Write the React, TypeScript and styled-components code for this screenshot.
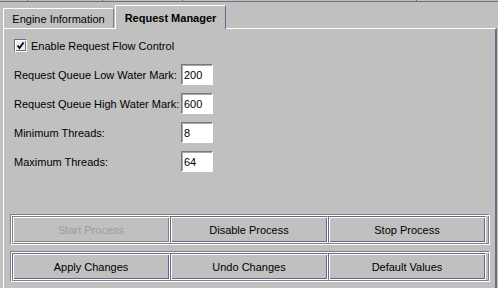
import React from 'react';
import styled, { createGlobalStyle } from 'styled-components';

const GlobalStyle = createGlobalStyle`
  html, body {
    margin: 0;
    padding: 0;
    background: #c0c0c0;
  }
  body {
    font-family: 'Liberation Sans', Arial, sans-serif;
    font-size: 11px;
    color: #000;
  }
`;

const DARK = '#66668a';
const SHADOW = '#808080';

const Window = styled.div`
  width: 498px;
  height: 288px;
  background: #c0c0c0;
  display: flex;
  flex-direction: column;
  overflow: hidden;
`;

const HeaderStrip = styled.div`
  display: flex;
  height: 2px;
`;

const HeaderCell = styled.div<{ $w?: number }>`
  flex: ${p => (p.$w ? `0 0 ${p.$w}px` : '1')};
  height: 1px;
  border-bottom: 1px solid #6e6e80;
  border-right: ${p => (p.$w ? '1px solid #6e6e80' : 'none')};
`;

const TabRow = styled.div`
  display: flex;
  align-items: flex-end;
  height: 23px;
  margin: 3px 0 0 3px;
`;

const Tab = styled.div<{ $active?: boolean }>`
  box-sizing: border-box;
  width: ${p => (p.$active ? '111px' : '111px')};
  height: ${p => (p.$active ? '24px' : '20px')};
  margin-left: ${p => (p.$active ? '1px' : '0')};
  margin-bottom: ${p => (p.$active ? '-1px' : '0')};
  position: relative;
  z-index: ${p => (p.$active ? 1 : 0)};
  background: #c0c0c0;
  border-top: 1px solid #fff;
  border-left: 1px solid #fff;
  border-right: 1px solid ${p => (p.$active ? DARK : SHADOW)};
  display: flex;
  align-items: center;
  justify-content: center;
  padding-top: ${p => (p.$active ? '1px' : '1px')};
  font-weight: ${p => (p.$active ? 700 : 400)};
  white-space: nowrap;
`;

const Panel = styled.div`
  flex: 1;
  display: flex;
  flex-direction: column;
  margin: 0 1px 0 3px;
  border-top: 1px solid #fff;
  border-left: 1px solid #fff;
  border-right: 2px solid #6b6b85;
`;

const Form = styled.div`
  padding: 10px 0 0 10px;
`;

const CheckRow = styled.label`
  display: flex;
  align-items: center;
  gap: 4px;
  height: 13px;
`;

const CheckBox = styled.span`
  box-sizing: border-box;
  width: 13px;
  height: 13px;
  border: 1px solid;
  border-color: #6c6c8c #fff #fff #6c6c8c;
  box-shadow: inset 1px 1px 0 #fff, inset -1px -1px 0 #6c6c8c;
  background: #ececec;
  display: flex;
  align-items: center;
  justify-content: center;
`;

const Fields = styled.div`
  display: grid;
  grid-template-columns: 167px 32px;
  grid-auto-rows: 21px;
  row-gap: 8px;
  margin-top: 12px;
`;

const Label = styled.span`
  display: flex;
  align-items: center;
  white-space: nowrap;
`;

const Field = styled.div`
  box-sizing: border-box;
  background: #fff;
  border: 1px solid;
  border-color: #7a7a7a #fff #fff #7a7a7a;
  box-shadow: inset 1px 1px 0 #a8a8a8;
  padding: 3px 0 0 2px;
  line-height: 15px;
`;

const ButtonArea = styled.div`
  margin-top: auto;
  display: flex;
  flex-direction: column;
  gap: 6px;
  padding: 0 5px 6px 6px;
`;

const ButtonGroup = styled.div`
  box-sizing: border-box;
  height: 31px;
  border: 1px solid;
  border-color: ${SHADOW} #fff #fff ${SHADOW};
  box-shadow: inset 1px 1px 0 #fff, inset -1px -1px 0 ${SHADOW};
  padding: 1px 3px 1px 1px;
  display: grid;
  grid-template-columns: repeat(3, 1fr);
`;

const Button = styled.div<{ $disabled?: boolean }>`
  box-sizing: border-box;
  height: 27px;
  border: 1px solid;
  border-color: ${p => (p.$disabled ? SHADOW : DARK)} #fff #fff ${p => (p.$disabled ? SHADOW : DARK)};
  box-shadow: inset 1px 1px 0 #fff, inset -1px -1px 0 ${p => (p.$disabled ? SHADOW : DARK)};
  display: flex;
  align-items: center;
  justify-content: center;
  color: ${p => (p.$disabled ? '#9c9c9c' : '#000')};
`;

const fields = [
  { label: 'Request Queue Low Water Mark:', value: '200' },
  { label: 'Request Queue High Water Mark:', value: '600' },
  { label: 'Minimum Threads:', value: '8' },
  { label: 'Maximum Threads:', value: '64' },
];

export default function App() {
  return (
    <>
      <GlobalStyle />
      <Window>
        <HeaderStrip>
          <HeaderCell $w={27} />
          <HeaderCell $w={74} />
          <HeaderCell $w={79} />
          <HeaderCell $w={233} />
          <HeaderCell />
        </HeaderStrip>
        <TabRow>
          <Tab>Engine Information</Tab>
          <Tab $active>Request Manager</Tab>
        </TabRow>
        <Panel>
          <Form>
            <CheckRow>
              <CheckBox>
                <svg width="9" height="9" viewBox="0 0 9 9">
                  <path d="M1.5 4.5 L3.5 7 L7.5 1.5" fill="none" stroke="#000" strokeWidth="1.8" />
                </svg>
              </CheckBox>
              Enable Request Flow Control
            </CheckRow>
            <Fields>
              {fields.map(f => (
                <React.Fragment key={f.label}>
                  <Label>{f.label}</Label>
                  <Field>{f.value}</Field>
                </React.Fragment>
              ))}
            </Fields>
          </Form>
          <ButtonArea>
            <ButtonGroup>
              <Button $disabled>Start Process</Button>
              <Button>Disable Process</Button>
              <Button>Stop Process</Button>
            </ButtonGroup>
            <ButtonGroup>
              <Button>Apply Changes</Button>
              <Button>Undo Changes</Button>
              <Button>Default Values</Button>
            </ButtonGroup>
          </ButtonArea>
        </Panel>
      </Window>
    </>
  );
}
